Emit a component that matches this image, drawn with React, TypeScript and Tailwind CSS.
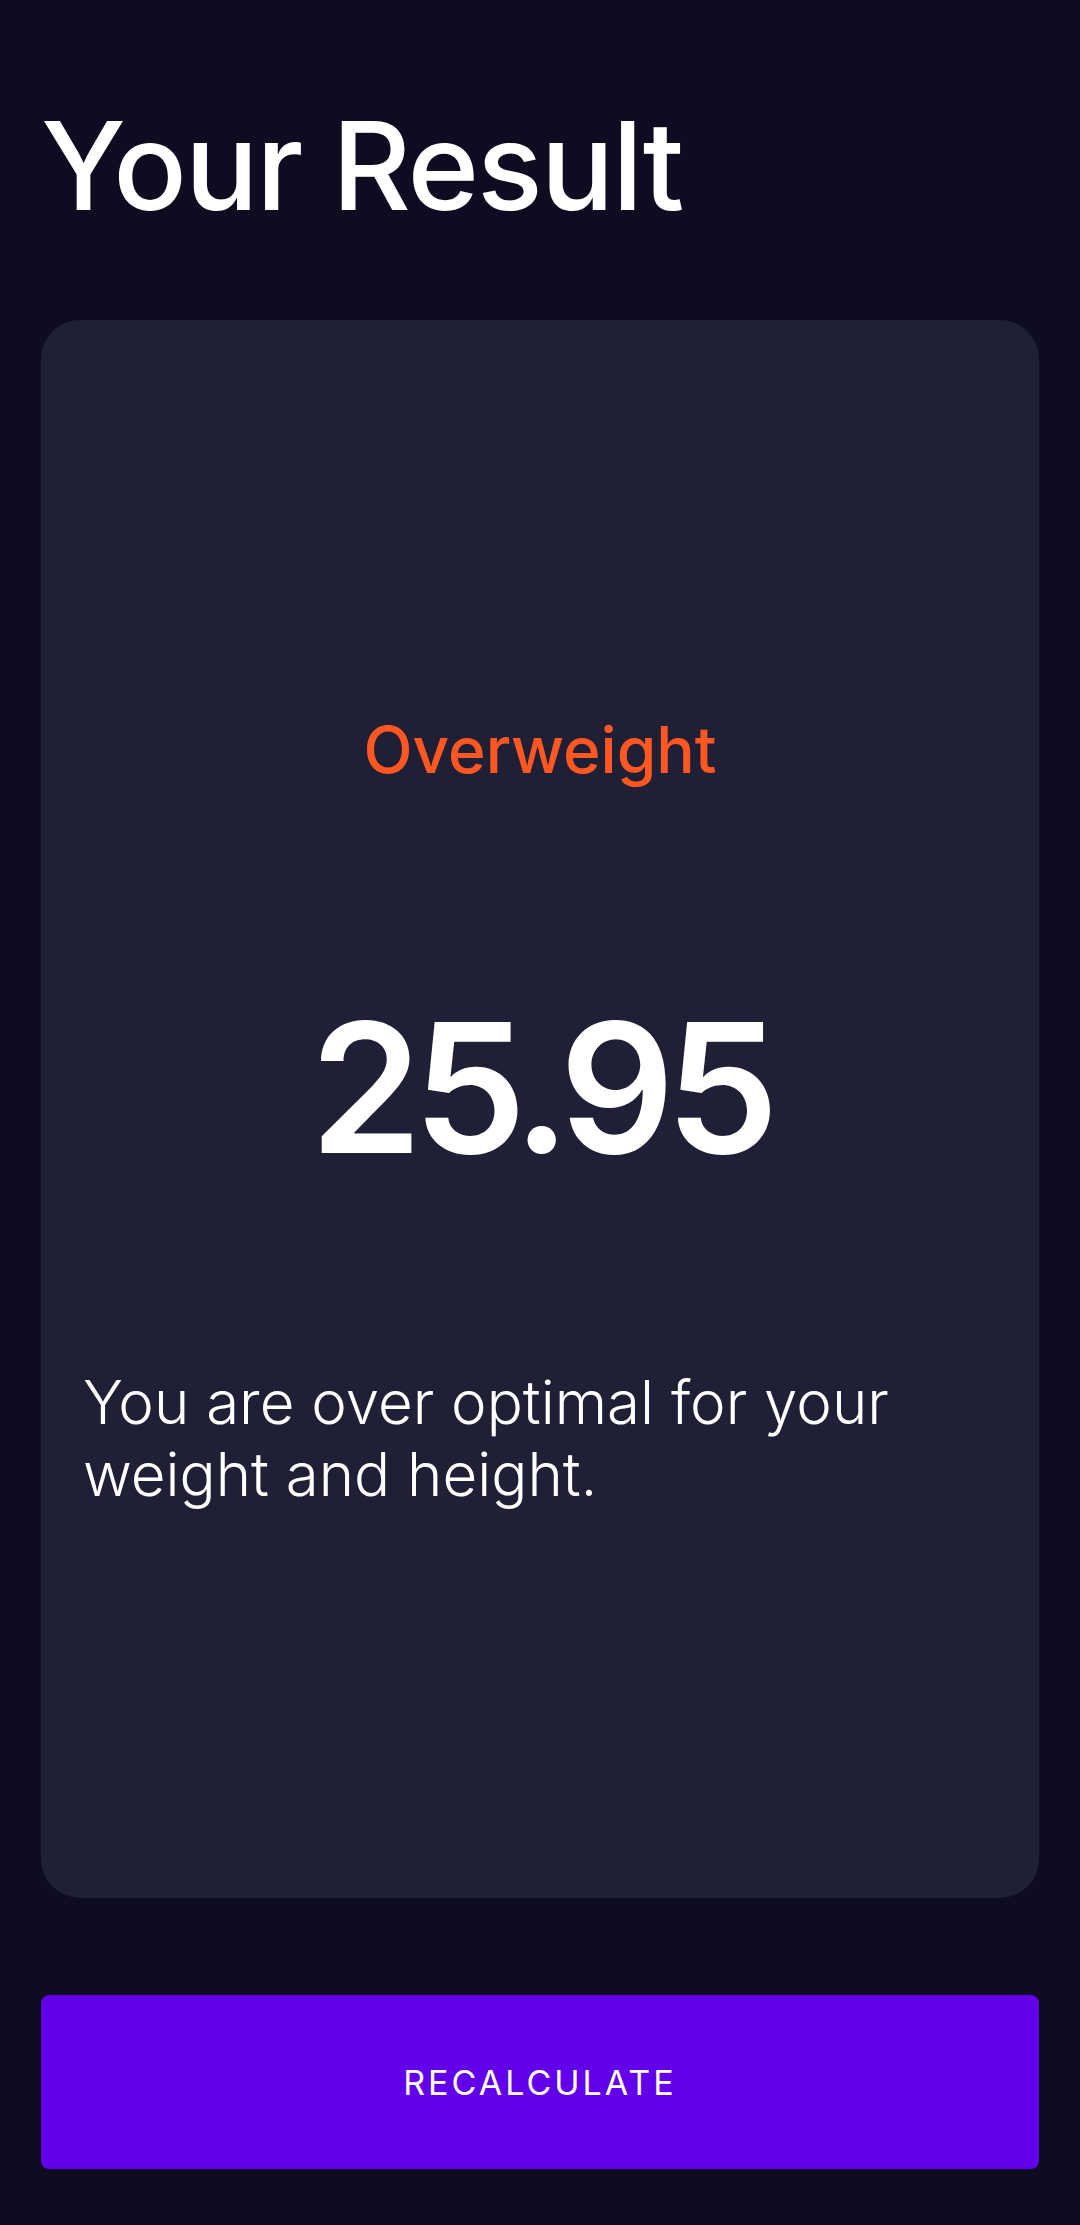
export default function App() {
  return (
    <div
      className="min-h-[2225px] bg-[#0e0c21] px-[41px] text-white"
      style={{ fontFamily: "Inter, 'Noto Sans', sans-serif" }}
    >
      {/* title */}
      <header className="h-[320px] pt-[96px]">
        <h1 className="text-[122px] font-medium leading-[140px] tracking-[-2px]">Your Result</h1>
      </header>

      {/* result card */}
      <section className="flex h-[1578px] flex-col items-stretch rounded-[39px] bg-[#1f1f35] px-[42px]">
        <p className="mt-[388px] text-center text-[64px] font-medium leading-[84px] text-[#ff5722]">
          Overweight
        </p>
        <p className="mt-[196px] text-center text-[180px] font-semibold leading-[200px] tracking-[-9px]">
          25.95
        </p>
        <p className="mt-[178px] text-[60px] font-light leading-[72px]">
          You are over optimal for your weight and height.
        </p>
      </section>

      {/* button */}
      <button className="mt-[97px] flex h-[174px] w-full items-center justify-center rounded-[8px] bg-[#6200ea] text-[34px] tracking-[3px] text-white">
        RECALCULATE
      </button>
    </div>
  );
}
